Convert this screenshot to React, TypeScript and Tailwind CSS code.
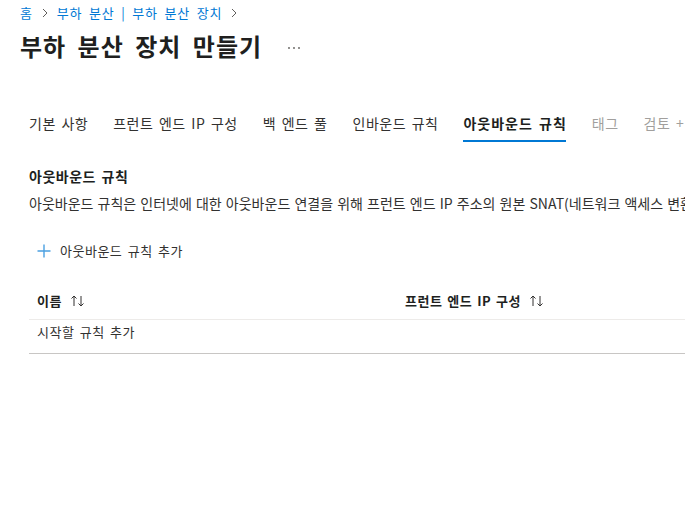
export default function App() {
  const tabs = ["기본 사항", "프런트 엔드 IP 구성", "백 엔드 풀", "인바운드 규칙", "아웃바운드 규칙", "태그", "검토 + 만들기"];
  const active = 4;

  return (
    <div className="w-[685px] h-[530px] overflow-hidden bg-white text-[#323130] font-['Noto_Sans_CJK_KR',sans-serif]">
      {/* breadcrumb */}
      <div className="flex items-center h-[26px] pl-[20px] text-[13px] text-[#0078d4] tracking-[0.8px] [word-spacing:3px]">
        <span>홈</span>
        <Chevron />
        <span>부하 분산 | 부하 분산 장치</span>
        <Chevron />
      </div>

      {/* title */}
      <div className="flex items-center h-[40px] pl-[20px]">
        <h1 className="text-[24px] font-semibold text-[#201f1e] tracking-[1px] [word-spacing:5px]">부하 분산 장치 만들기</h1>
        <svg width="12" height="4" viewBox="0 0 12 4" className="ml-[26px] mt-[4px]">
          <circle cx="1" cy="2" r="0.9" fill="#605e5c" />
          <circle cx="6" cy="2" r="0.9" fill="#605e5c" />
          <circle cx="11" cy="2" r="0.9" fill="#605e5c" />
        </svg>
      </div>

      {/* tabs */}
      <div className="flex gap-[25px] pl-[29px] mt-[42px] whitespace-nowrap">
        {tabs.map((t, i) => (
          <div key={t} className="flex flex-col">
            <span
              className={
                "h-[30px] leading-[30px] text-[14px] [word-spacing:2px] " +
                (i === active
                  ? "font-semibold text-[#201f1e] tracking-[1px]"
                  : i > active
                  ? "text-[#a19f9d] tracking-[0.5px]"
                  : "text-[#323130] tracking-[0.5px]")
              }
            >
              {t}
            </span>
            <span className={"h-[2px] mt-[2px] mr-[1px] " + (i === active ? "bg-[#0078d4]" : "bg-transparent")} />
          </div>
        ))}
      </div>

      {/* section */}
      <div className="pl-[29px] mt-[22px]">
        <div className="text-[14px] font-semibold text-[#201f1e] h-[24px] leading-[24px] tracking-[0.5px] [word-spacing:2px]">
          아웃바운드 규칙
        </div>
        <div className="text-[14px] h-[30px] leading-[30px] whitespace-nowrap [word-spacing:1px]">
          아웃바운드 규칙은 인터넷에 대한 아웃바운드 연결을 위해 프런트 엔드 IP 주소의 원본 SNAT(네트워크 액세스 변환)를 구성합니다.
        </div>

        <div className="flex items-center mt-[17px] pl-[8px] h-[32px] text-[13px] tracking-[0.5px] [word-spacing:2px]">
          <svg width="14" height="14" viewBox="0 0 14 14" className="mr-[9px]">
            <path d="M7 0.5v13M0.5 7h13" stroke="#4ba0e1" strokeWidth="1.4" fill="none" />
          </svg>
          <span>아웃바운드 규칙 추가</span>
        </div>

        {/* table */}
        <div className="mt-[16px]">
          <div className="flex h-[37px] items-center text-[13px] font-semibold text-[#201f1e] border-b border-[#edebe9] tracking-[0.5px] [word-spacing:1.5px]">
            <div className="w-[376px] pl-[8px] flex items-center">
              이름
              <SortIcon />
            </div>
            <div className="flex items-center">
              프런트 엔드 IP 구성
              <SortIcon />
            </div>
          </div>
          <div className="h-[34px] pt-[2px] leading-[20px] text-[13px] pl-[8px] border-b border-[#c8c6c4] tracking-[0.5px] [word-spacing:2px]">
            시작할 규칙 추가
          </div>
        </div>
      </div>
    </div>
  );
}

function Chevron() {
  return (
    <svg width="8" height="10" viewBox="0 0 8 10" className="mx-[8px]">
      <path d="M2 1l4 4-4 4" stroke="#605e5c" strokeWidth="1" fill="none" />
    </svg>
  );
}

function SortIcon() {
  return (
    <svg width="16" height="14" viewBox="0 0 16 14" className="ml-[8px]">
      <path d="M4 12V2M1.5 4.5L4 2l2.5 2.5" stroke="#323130" strokeWidth="1" fill="none" />
      <path d="M11 2v10M8.5 9.5L11 12l2.5-2.5" stroke="#323130" strokeWidth="1" fill="none" />
    </svg>
  );
}
